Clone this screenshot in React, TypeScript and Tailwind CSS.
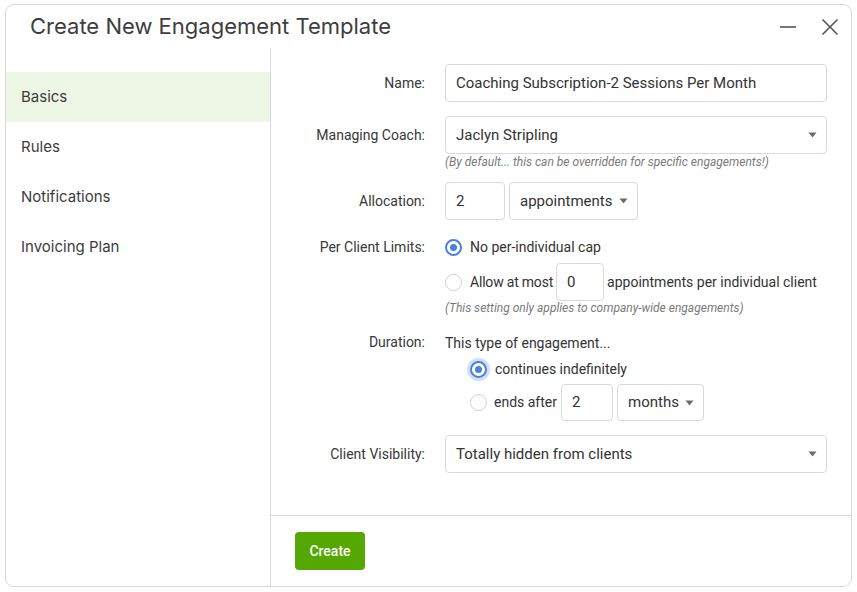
import React from "react";

const Arrow = () => (
  <svg width="9" height="6" viewBox="0 0 9 6" className="shrink-0">
    <path d="M0.5 0.5 L8.5 0.5 L4.5 5.5 Z" fill="#6b6b6b" />
  </svg>
);

const Radio = ({ checked, glow }: { checked?: boolean; glow?: boolean }) =>
  checked ? (
    <span
      className={
        "flex h-[17px] w-[17px] shrink-0 items-center justify-center rounded-full border-2 border-[#4a80e3] bg-white " +
        (glow ? "shadow-[0_0_0_3px_rgba(74,128,227,0.25)]" : "")
      }
    >
      <span className="h-[7px] w-[7px] rounded-full bg-[#4a80e3]" />
    </span>
  ) : (
    <span className="h-[17px] w-[17px] shrink-0 rounded-full border border-[#d0d0d0] bg-white" />
  );

const Label = ({ children }: { children: React.ReactNode }) => (
  <div className="w-[154px] shrink-0 text-right text-[14px] text-[#383838]">{children}</div>
);

export default function App() {
  return (
    <div
      className="h-[592px] w-[857px] bg-white pl-[5px] pt-[4px]"
      style={{ fontFamily: "Roboto, 'Liberation Sans', sans-serif" }}
    >
      <div className="flex h-[583px] w-[847px] flex-col rounded-[9px] border border-[#d8d8d8]">
        {/* header */}
        <div className="flex h-[43px] shrink-0 items-center justify-between pl-[24px] pr-[12px]">
          <div
            className="text-[22px] text-[#3d3d3d]"
            style={{ fontFamily: "Inter, 'Liberation Sans', sans-serif" }}
          >
            Create New Engagement Template
          </div>
          <div className="flex items-center gap-[24px]">
            <svg width="18" height="18" viewBox="0 0 18 18">
              <path d="M1 9 H17" stroke="#555" strokeWidth="1.6" />
            </svg>
            <svg width="18" height="18" viewBox="0 0 18 18">
              <path d="M1.5 1.5 L16.5 16.5 M16.5 1.5 L1.5 16.5" stroke="#555" strokeWidth="1.6" />
            </svg>
          </div>
        </div>
        {/* body */}
        <div className="flex min-h-0 flex-1">
          <div
            className="w-[265px] shrink-0 border-r border-[#d8d8d8] pt-[24px] text-[15px] text-[#3d3d3d]"
            style={{ fontFamily: "Inter, 'Liberation Sans', sans-serif" }}
          >
            <div className="flex h-[50px] items-center bg-[#eef6e6] pl-[15px]">Basics</div>
            <div className="flex h-[50px] items-center pl-[15px]">Rules</div>
            <div className="flex h-[50px] items-center pl-[15px]">Notifications</div>
            <div className="flex h-[50px] items-center pl-[15px]">Invoicing Plan</div>
          </div>
          <div className="flex min-w-0 flex-1 flex-col">
            <div className="flex-1 pr-[24px] pt-[16px]">
              {/* Name */}
              <div className="flex items-center gap-[20px]">
                <Label>Name:</Label>
                <div className="flex h-[38px] flex-1 items-center rounded-[4px] border border-[#d9d9d9] px-[10px] text-[15px] text-[#333]">
                  Coaching Subscription-2 Sessions Per Month
                </div>
              </div>
              {/* Managing coach */}
              <div className="mt-[14px] flex items-center gap-[20px]">
                <Label>Managing Coach:</Label>
                <div className="flex h-[38px] flex-1 items-center justify-between rounded-[4px] border border-[#d9d9d9] pl-[10px] pr-[9px] text-[15px] text-[#333]">
                  <span>Jaclyn Stripling</span>
                  <Arrow />
                </div>
              </div>
              <div className="ml-[174px] mt-[1px] text-[12px] italic leading-[14px] text-[#7a7a7a]">
                (By default... this can be overridden for specific engagements!)
              </div>
              {/* Allocation */}
              <div className="mt-[13px] flex items-center gap-[20px]">
                <Label>Allocation:</Label>
                <div className="flex items-center gap-[4px]">
                  <div className="flex h-[38px] w-[60px] items-center rounded-[4px] border border-[#d9d9d9] px-[10px] text-[15px] text-[#333]">
                    2
                  </div>
                  <div className="flex h-[38px] w-[129px] items-center justify-between rounded-[4px] border border-[#d9d9d9] pl-[10px] pr-[9px] text-[15px] text-[#333]">
                    <span>appointments</span>
                    <Arrow />
                  </div>
                </div>
              </div>
              {/* Per client limits */}
              <div className="mt-[17px] flex items-center gap-[20px]">
                <Label>Per Client Limits:</Label>
                <div className="flex h-[20px] items-center gap-[8px] text-[14px] text-[#333]">
                  <Radio checked />
                  <span>No per-individual cap</span>
                </div>
              </div>
              <div className="ml-[174px] mt-[5px] flex items-center text-[14px] text-[#333]">
                <Radio />
                <span className="ml-[8px] tracking-[-0.2px]">Allow at most</span>
                <div className="ml-[3px] flex h-[38px] w-[48px] items-center rounded-[4px] border border-[#d9d9d9] px-[10px] text-[15px]">
                  0
                </div>
                <span className="ml-[3px]">appointments per individual client</span>
              </div>
              <div className="ml-[174px] text-[12px] italic leading-[14px] text-[#7a7a7a]">
                (This setting only applies to company-wide engagements)
              </div>
              {/* Duration */}
              <div className="mt-[17px] flex items-center gap-[20px]">
                <Label>Duration:</Label>
                <div className="text-[14px] leading-[20px] text-[#333]">This type of engagement...</div>
              </div>
              <div className="ml-[199px] mt-[6px] flex h-[20px] items-center gap-[8px] text-[14px] text-[#333]">
                <Radio checked glow />
                <span>continues indefinitely</span>
              </div>
              <div className="ml-[199px] mt-[5px] flex items-center text-[14px] text-[#333]">
                <Radio />
                <span className="ml-[7px]">ends after</span>
                <div className="ml-[4px] flex h-[37px] w-[52px] items-center rounded-[4px] border border-[#d9d9d9] px-[10px] text-[15px]">
                  2
                </div>
                <div className="ml-[4px] flex h-[37px] w-[87px] items-center justify-between rounded-[4px] border border-[#d9d9d9] pl-[10px] pr-[9px] text-[15px]">
                  <span>months</span>
                  <Arrow />
                </div>
              </div>
              {/* Client visibility */}
              <div className="mt-[14px] flex items-center gap-[20px]">
                <Label>Client Visibility:</Label>
                <div className="flex h-[38px] flex-1 items-center justify-between rounded-[4px] border border-[#d9d9d9] pl-[10px] pr-[9px] text-[15px] text-[#333]">
                  <span>Totally hidden from clients</span>
                  <Arrow />
                </div>
              </div>
            </div>
            <div className="h-[71px] shrink-0 border-t border-[#d8d8d8] pl-[24px] pt-[16px]">
              <button className="flex h-[38px] w-[70px] items-center justify-center rounded-[4px] bg-[#55a702] text-[14px] font-medium text-white">
                Create
              </button>
            </div>
          </div>
        </div>
      </div>
    </div>
  );
}
